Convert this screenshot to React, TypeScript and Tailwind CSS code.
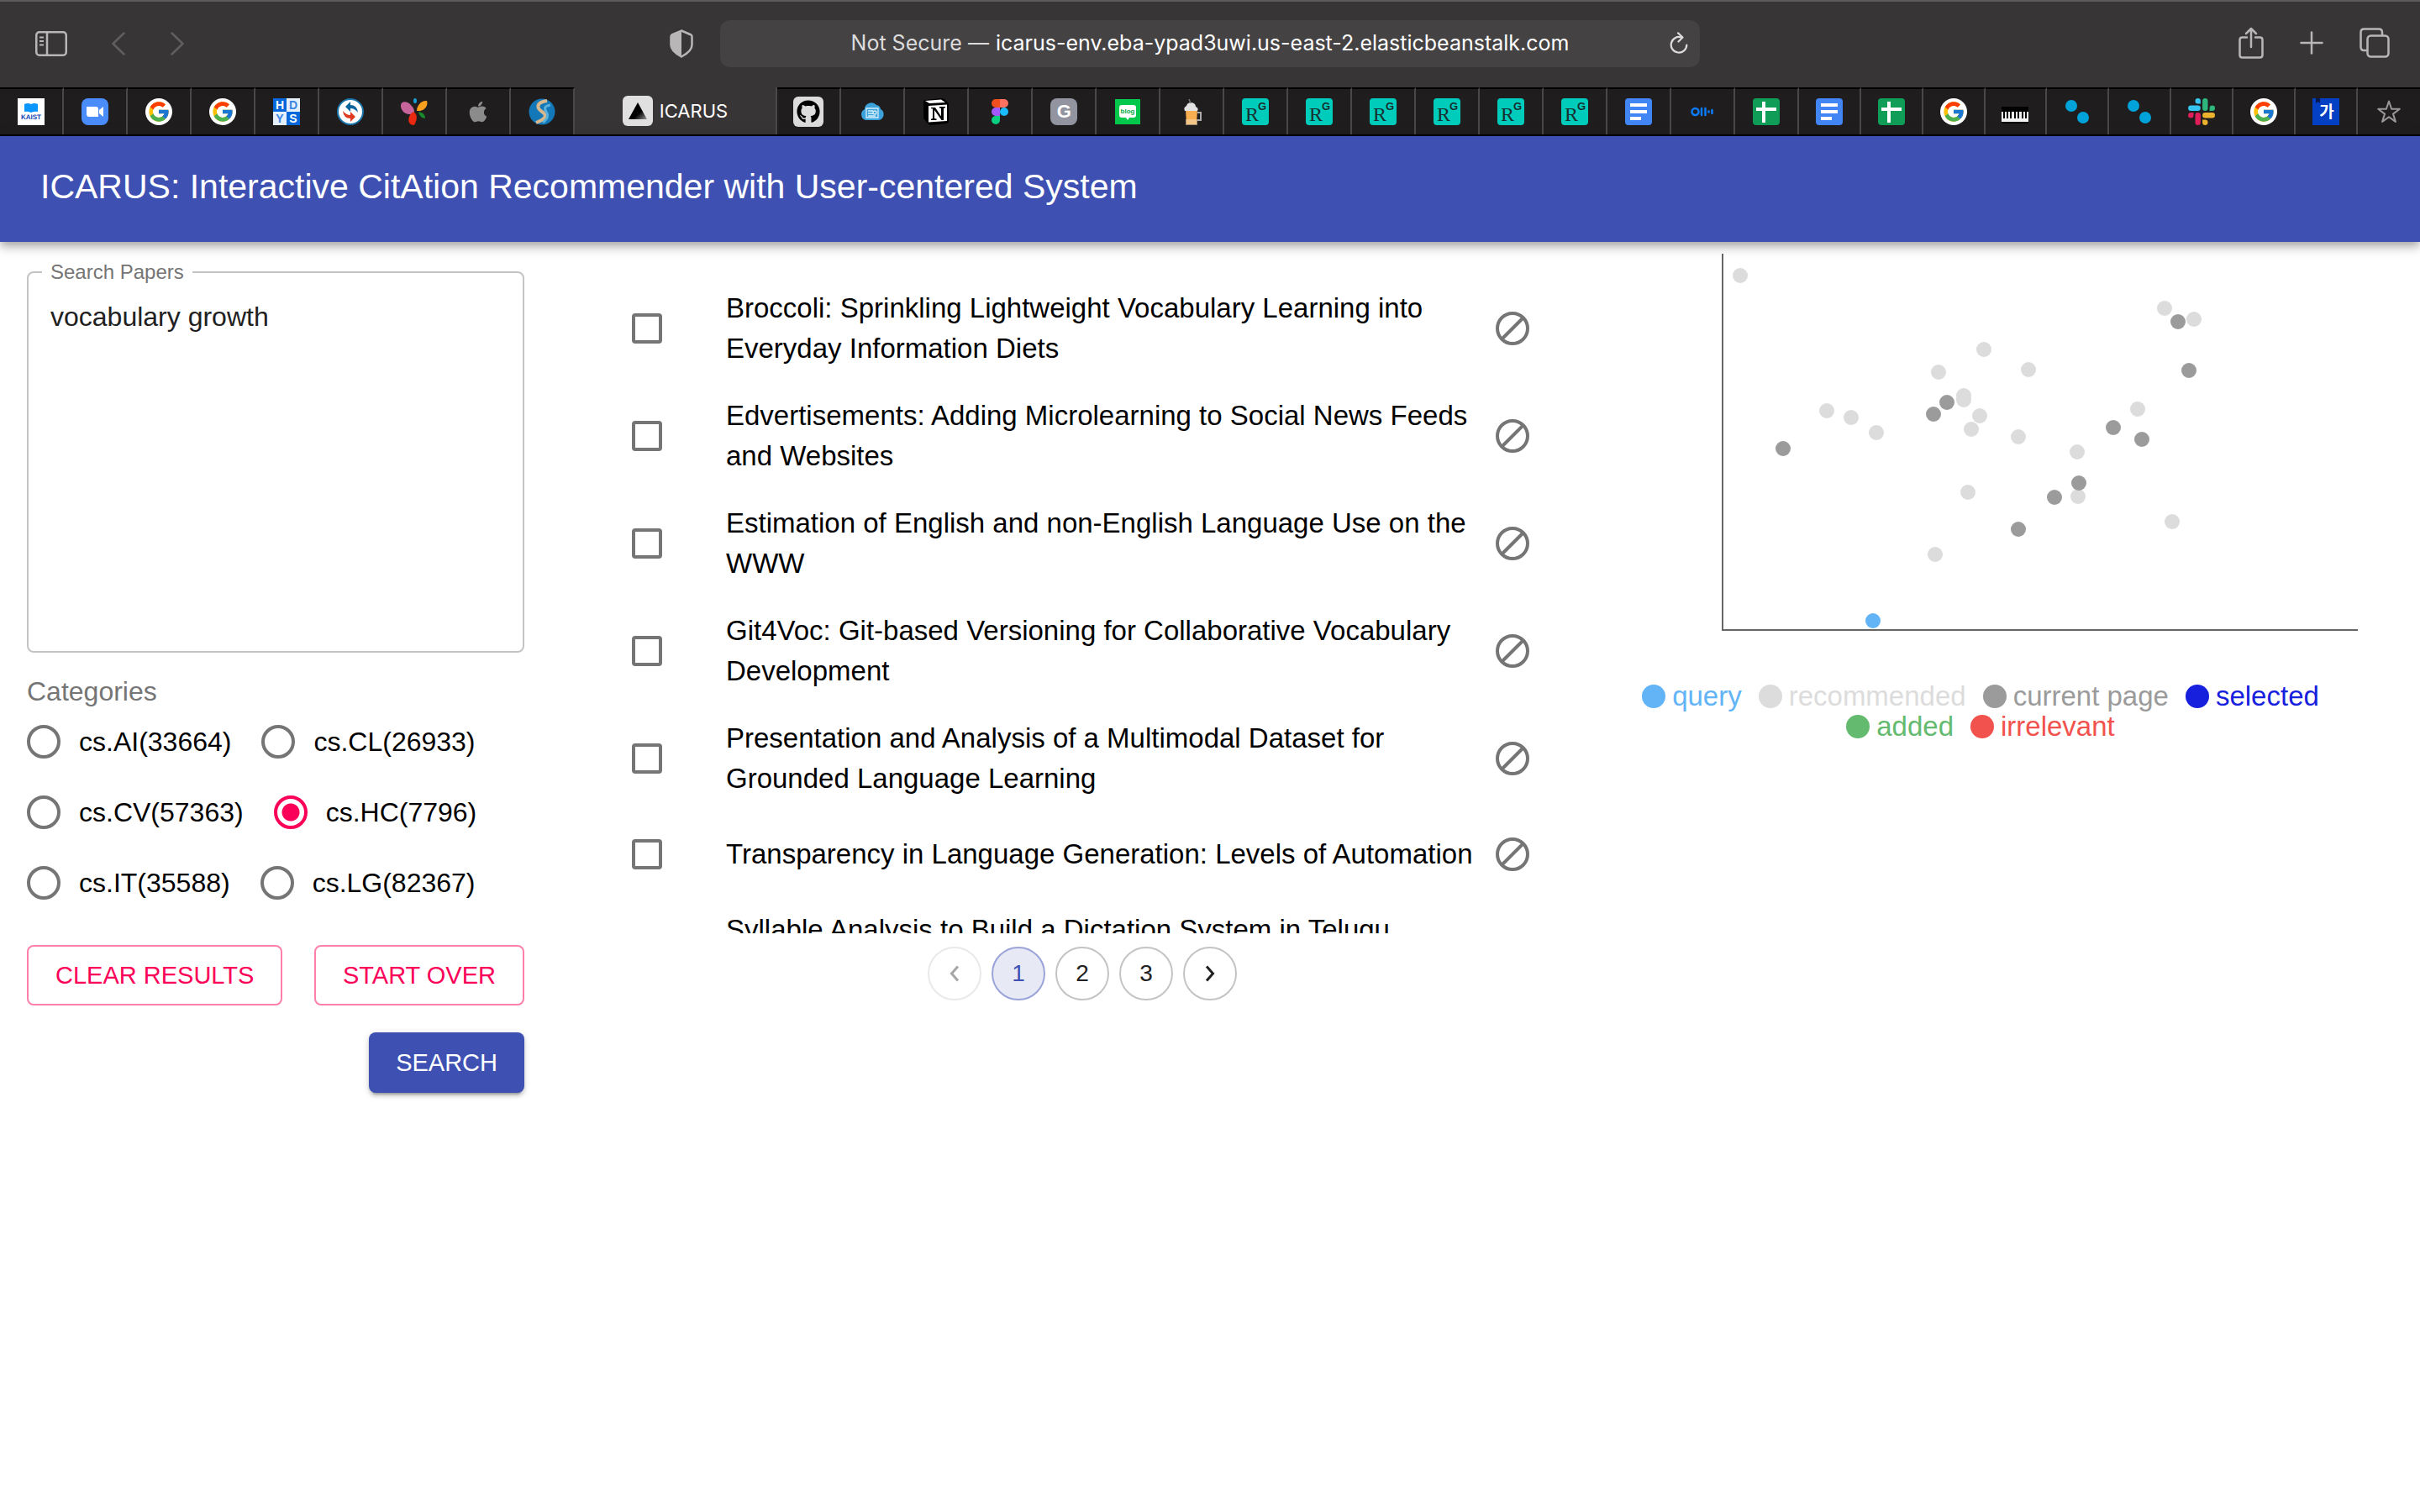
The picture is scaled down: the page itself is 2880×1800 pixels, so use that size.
import { useState, type ReactNode } from "react";
import { FcGoogle } from "react-icons/fc";
import { FaApple, FaGithub } from "react-icons/fa";

/* ---------- favicons ---------- */

function Kaist() {
  return (
    <svg viewBox="0 0 32 32" className="size-8">
      <rect width="32" height="32" fill="#fff" />
      <path d="M8 7q4-2 8 0q4-2 8 0v9q-4-1-8 1q-4-2-8-1z" fill="#0a96ff" />
      <text x="16" y="25" textAnchor="middle" fontSize="8" fontWeight="700" fill="#1546b4" textRendering="geometricPrecision">KAIST</text>
    </svg>
  );
}

function Zoom() {
  return (
    <svg viewBox="0 0 32 32" className="size-8">
      <rect width="32" height="32" rx="8" fill="#4a8cf9" />
      <path d="M6 10h11q3 0 3 3v9H9q-3 0-3-3zM21 14l5-4v12l-5-4z" fill="#fff" />
    </svg>
  );
}

function Google() {
  return (
    <span className="grid size-8 place-items-center rounded-full bg-white">
      <FcGoogle className="size-7" />
    </span>
  );
}

function Hdys() {
  return (
    <svg viewBox="0 0 32 32" className="size-8" fontWeight="700" fontSize="14" textAnchor="middle">
      <rect width="32" height="32" fill="#e6f0fc" />
      <path d="M0 0h16v16H0zM16 16h16v16H16z" fill="#0768dc" />
      <text x="8" y="13" fill="#fff">H</text>
      <text x="24" y="13" fill="#3b86e0">D</text>
      <text x="8" y="29" fill="#3b86e0">Y</text>
      <text x="24" y="29" fill="#fff">S</text>
    </svg>
  );
}

function Sync() {
  return (
    <svg viewBox="0 0 32 32" className="size-8">
      <circle cx="16" cy="16" r="15" fill="#fff" stroke="#1b76ad" strokeWidth="2" />
      <path d="M10 10l6-6v4q8 0 9 9q-4-5-9-5v4z" fill="#0a649c" />
      <path d="M22 22l-6 6v-4q-8 0-9-9q4 5 9 5v-4z" fill="#e03a20" />
    </svg>
  );
}

function Butterfly() {
  return (
    <svg viewBox="0 0 32 32" className="size-8">
      <path d="M16 17C9 22 1 17 0 10S7 3 11 7s5 6 5 10z" fill="#c8649c" />
      <path d="M19 15C19 8 25 2 31 3c2 6-3 13-12 12z" fill="#fba01e" />
      <path d="M15 16c5 3 5 9 1 16c-6 0-8-5-6-10c1-3 3-5 5-6z" fill="#ea2a10" />
      <path d="M21 16q8 1 8 8q-6 0-8-8z" fill="#188a2c" />
      <ellipse cx="17" cy="3" rx="2" ry="3" fill="#14a0d8" />
    </svg>
  );
}

function Globe() {
  return (
    <svg viewBox="0 0 32 32" className="size-8">
      <circle cx="16" cy="16" r="15.5" fill="#1478b8" />
      <path d="M22 3C8 5 10 12 16 16s6 8-7 13" fill="none" stroke="#d8b88c" strokeWidth="4" />
      <path d="M26 8C16 10 20 14 22 18s0 7-5 11" fill="none" stroke="#58b0dc" strokeWidth="3" />
    </svg>
  );
}

function Triangle() {
  return (
    <svg viewBox="0 0 36 36" className="size-9">
      <defs>
        <linearGradient id="tri" x1="0" y1="0" x2="1" y2="1">
          <stop offset="0.6" stopColor="#000" />
          <stop offset="1" stopColor="#999" />
        </linearGradient>
      </defs>
      <rect width="36" height="36" rx="6" fill="#e0e0e0" />
      <path d="M18 8l11 20H7z" fill="url(#tri)" />
    </svg>
  );
}

function Github() {
  return (
    <span className="grid size-9 place-items-center rounded-md bg-[#dcdcdc]">
      <FaGithub className="size-7 text-black" />
    </span>
  );
}

function CloudDoc() {
  return (
    <svg viewBox="0 0 32 32" className="size-8">
      <path d="M8 26a7 7 0 0 1-1-13a8 8 0 0 1 14-5a6 6 0 0 1 5 5a7 7 0 0 1-2 13z" fill="#3ca2dc" />
      <path d="M9 12h14v11H9zM11 15h6M11 18h6M11 21h9" fill="none" stroke="#d6effc" strokeWidth="1.3" />
      <circle cx="19" cy="17" r="2" fill="none" stroke="#d6effc" strokeWidth="1.3" />
    </svg>
  );
}

function Notion() {
  return (
    <svg viewBox="0 0 32 32" className="size-8">
      <path d="M1 4q0-2 2-2L22 0q2 0 4 1l4 4q1 1 1 3v19q0 3-3 3L10 32q-2 0-4-2l-4-5q-1-1-1-3z" fill="#000" />
      <path d="M3 3l19-1.500 5 3.500L8 6z" fill="#fff" />
      <path d="M7 9l22-1.500V27L7 28.500z" fill="#fff" />
      <path d="M10 11h5l7 10.500V12l-2-.5V10h7v1.200l-2 .6V26h-2.500L14 14v10l2.500.6V26H10v-1.300l2-.6V12.500l-2-.5z" fill="#000" />
    </svg>
  );
}

function Figma() {
  return (
    <svg viewBox="0 0 20 30" className="h-[30px] w-5">
      <path d="M10 0H5a5 5 0 0 0 0 10h5z" fill="#f24e1e" />
      <path d="M10 0h5a5 5 0 0 1 0 10h-5z" fill="#ff7262" />
      <path d="M10 10H5a5 5 0 0 0 0 10h5z" fill="#a259ff" />
      <circle cx="15" cy="15" r="5" fill="#1abcfe" />
      <path d="M10 20H5a5 5 0 1 0 5 5z" fill="#0acf83" />
    </svg>
  );
}

function GrayG() {
  return <span className="grid size-8 place-items-center rounded-lg bg-[#9294a0] text-[22px] leading-8 font-bold text-white">G</span>;
}

function Blog() {
  return (
    <svg viewBox="0 0 30 30" className="size-[30px]">
      <rect width="30" height="30" fill="#04c84c" />
      <path d="M8 7h14q3 0 3 3v9q0 3-3 3h-5l-2 3-2-3H8q-3 0-3-3v-9q0-3 3-3z" fill="#fff" />
      <text x="15" y="17" textAnchor="middle" fontSize="8" fontWeight="700" fill="#04a844">blog</text>
    </svg>
  );
}

function Beer() {
  return (
    <svg viewBox="0 0 32 32" className="size-8">
      <path d="M23 17h4v9h-4" fill="none" stroke="#aaa" strokeWidth="2" />
      <path d="M9 13h14l-1 18H10z" fill="#f8ae50" />
      <path d="M9 25h14v7H9z" fill="#f0d4ac" opacity="0.6" />
      <path d="M8 15q-2-4 2-6q1-4 6-4q5 1 5 5q4 2 2 5z" fill="#e2e2e2" />
      <path d="M13 1l2 5" stroke="#777" strokeWidth="1.500" />
    </svg>
  );
}

function ResearchGate() {
  return (
    <svg viewBox="0 0 32 32" className="size-8">
      <rect width="32" height="32" rx="4" fill="#00ccbb" />
      <text x="4" y="27" fontSize="24" className="font-['Liberation_Serif',serif]" fill="#17302f">R</text>
      <text x="19" y="14" fontSize="13" fontWeight="700" fill="#17302f">G</text>
    </svg>
  );
}

function Docs() {
  return (
    <svg viewBox="0 0 32 32" className="size-8">
      <rect width="32" height="32" rx="4" fill="#4285f4" />
      <path d="M6 6h20v4H6zM6 14h20v4H6zM6 22h13v4H6z" fill="#fff" />
    </svg>
  );
}

function Otter() {
  return (
    <svg viewBox="0 0 28 12" className="h-3 w-7" fill="none" stroke="#0a7cff" strokeWidth="2.500" strokeLinecap="round">
      <circle cx="5.500" cy="6" r="4" />
      <path d="M13 2v8M17.500 2v8M21.500 5.500v1M25.500 4v4" />
    </svg>
  );
}

function Sheets() {
  return (
    <svg viewBox="0 0 32 32" className="size-8">
      <rect width="32" height="32" rx="4" fill="#0f9d58" />
      <path d="M11 4h4v7h13v4H15v14h-4V15H4v-4h7z" fill="#fff" />
    </svg>
  );
}

function Piano() {
  return (
    <svg viewBox="0 0 32 20" className="mt-2 h-5 w-8">
      <rect width="32" height="20" fill="#000" />
      <path d="M0 6h32v12H0z" fill="#f2f2f2" />
      <path d="M3 6v8M7 6v8M11 6v8M16 6v8M20 6v8M25 6v8M29 6v8" stroke="#000" strokeWidth="2" />
    </svg>
  );
}

function Dots() {
  return (
    <svg viewBox="0 0 28 28" className="size-7" fill="#00a3d9">
      <circle cx="7" cy="7" r="7" />
      <circle cx="21" cy="21" r="7" />
    </svg>
  );
}

function Slack() {
  return (
    <svg viewBox="0 0 32 32" className="size-8">
      <path d="M8.500 3.200a3.200 3.200 0 1 1 6.400 0v3.300h-3.200A3.200 3.200 0 0 1 8.500 3.200zM3.300 8.600h8.300a3.200 3.200 0 0 1 0 6.400H3.300a3.200 3.200 0 0 1 0-6.400z" fill="#36c5f0" />
      <path d="M28.800 8.600a3.200 3.200 0 1 1 0 6.400h-3.200v-3.200a3.200 3.200 0 0 1 3.200-3.200zM23.500 3.200v8.500a3.200 3.200 0 0 1-6.400 0V3.200a3.200 3.200 0 0 1 6.400 0z" fill="#2eb67d" />
      <path d="M23.500 28.800a3.200 3.200 0 1 1-6.400 0v-3.200h3.200a3.200 3.200 0 0 1 3.200 3.200zM28.800 23.500h-8.500a3.200 3.200 0 0 1 0-6.400h8.500a3.200 3.200 0 0 1 0 6.400z" fill="#ecb22e" />
      <path d="M3.300 23.500a3.200 3.200 0 1 1 0-6.400h3.200v3.200a3.200 3.200 0 0 1-3.200 3.200zM8.500 28.800v-8.500a3.200 3.200 0 0 1 6.400 0v8.500a3.200 3.200 0 0 1-6.400 0z" fill="#e01e5a" />
    </svg>
  );
}

function Dictionary() {
  return (
    <svg viewBox="0 0 32 32" className="size-8">
      <rect width="32" height="32" fill="#0340c4" />
      <path d="M4 0h5v6L6.500 4 4 6z" fill="#04174e" />
      <text x="17" y="23" textAnchor="middle" fontSize="19" fontWeight="700" className="font-['Noto_Sans_CJK_KR',sans-serif]" fill="#fff">가</text>
    </svg>
  );
}

function Star() {
  return (
    <svg viewBox="0 0 28 28" className="size-7" fill="none" stroke="#9a9899" strokeWidth="2" strokeLinejoin="round">
      <path d="M14 1.500l3.100 9.200 9.700.1-7.800 5.800 2.900 9.300-7.900-5.600-7.900 5.600 2.900-9.300-7.800-5.800 9.700-.1z" />
    </svg>
  );
}

/* ---------- browser chrome ---------- */

type TabInfo = { name: string; icon: ReactNode; narrow?: boolean; active?: boolean };

const tabs: TabInfo[] = [
  { name: "KAIST", icon: <Kaist /> },
  { name: "Zoom", icon: <Zoom /> },
  { name: "Google", icon: <Google /> },
  { name: "Google", icon: <Google /> },
  { name: "HDYS", icon: <Hdys /> },
  { name: "Sync", icon: <Sync /> },
  { name: "Butterfly", icon: <Butterfly /> },
  { name: "Apple", icon: <FaApple className="size-7 text-[#8b8b8b]" /> },
  { name: "Globe", icon: <Globe /> },
  { name: "ICARUS", icon: <Triangle />, active: true },
  { name: "GitHub", icon: <Github /> },
  { name: "Cloud", icon: <CloudDoc /> },
  { name: "Notion", icon: <Notion /> },
  { name: "Figma", icon: <Figma /> },
  { name: "G", icon: <GrayG /> },
  { name: "Blog", icon: <Blog /> },
  { name: "Beer", icon: <Beer /> },
  { name: "ResearchGate", icon: <ResearchGate /> },
  { name: "ResearchGate", icon: <ResearchGate /> },
  { name: "ResearchGate", icon: <ResearchGate /> },
  { name: "ResearchGate", icon: <ResearchGate /> },
  { name: "ResearchGate", icon: <ResearchGate /> },
  { name: "ResearchGate", icon: <ResearchGate /> },
  { name: "Docs", icon: <Docs /> },
  { name: "Otter", icon: <Otter /> },
  { name: "Sheets", icon: <Sheets /> },
  { name: "Docs", icon: <Docs />, narrow: true },
  { name: "Sheets", icon: <Sheets />, narrow: true },
  { name: "Google", icon: <Google />, narrow: true },
  { name: "Piano", icon: <Piano />, narrow: true },
  { name: "Dots", icon: <Dots />, narrow: true },
  { name: "Dots", icon: <Dots />, narrow: true },
  { name: "Slack", icon: <Slack />, narrow: true },
  { name: "Google", icon: <Google />, narrow: true },
  { name: "Dictionary", icon: <Dictionary />, narrow: true },
  { name: "Favorites", icon: <Star />, narrow: true },
];

function Toolbar() {
  return (
    <div className="grid h-[104px] grid-cols-[857fr_1166fr_857fr] items-center border-t-2 border-[#5d5b5c] bg-[#383536] pb-0.5 text-[#b8b6b7]">
      <div className="flex items-center pr-8 pl-[42px]">
        <button aria-label="Sidebar">
          <svg viewBox="0 0 38 30" className="h-[30px] w-[38px]" fill="none" stroke="currentColor" strokeWidth="2.500">
            <rect x="1.250" y="1.250" width="35.500" height="27.500" rx="3.500" />
            <path d="M14 1v28" />
            <path d="M5 7.500h5M5 12h5M5 16.500h5" strokeWidth="2" />
          </svg>
        </button>
        <button aria-label="Back" className="ml-[53px] text-[#605e5f]">
          <svg viewBox="0 0 16 28" className="h-7 w-4" fill="none" stroke="currentColor" strokeWidth="2.500" strokeLinecap="round" strokeLinejoin="round">
            <path d="M14.500 1.500L1.500 14l13 12.500" />
          </svg>
        </button>
        <button aria-label="Forward" className="ml-[54px] text-[#605e5f]">
          <svg viewBox="0 0 16 28" className="h-7 w-4" fill="none" stroke="currentColor" strokeWidth="2.500" strokeLinecap="round" strokeLinejoin="round">
            <path d="M1.500 1.500L14.500 14l-13 12.500" />
          </svg>
        </button>
        <button aria-label="Privacy report" className="ml-auto">
          <svg viewBox="0 0 28 34" className="h-[34px] w-7">
            <path d="M14 1.500l11.500 5q1 .5 1 2v10c0 5-5 10-12.500 14C6.500 28.500 1.500 23.500 1.500 18.500v-10q0-1.500 1-2z" fill="none" stroke="currentColor" strokeWidth="2.500" />
            <path d="M14 1.500v31C6.500 28.500 1.500 23.500 1.500 18.500v-10q0-1.500 1-2z" fill="currentColor" />
          </svg>
        </button>
      </div>
      <div className="flex h-14 items-center justify-between rounded-xl bg-[#444243] px-3.5 pb-0.5 font-['Inter',sans-serif] text-[25px] leading-8">
        <span className="w-[22px]" />
        <div className="flex gap-2">
          <label htmlFor="address" className="text-[#dddcdc]">Not Secure —</label>
          <input id="address" defaultValue="icarus-env.eba-ypad3uwi.us-east-2.elasticbeanstalk.com" className="field-sizing-content bg-transparent text-white outline-none" />
        </div>
        <button aria-label="Reload" className="text-[#dddcdc]">
          <svg viewBox="0 0 22 26" className="h-[26px] w-[22px]" fill="none" stroke="currentColor" strokeWidth="2.200" strokeLinecap="round" strokeLinejoin="round">
            <path d="M14 6.500A9.300 9.300 0 1 0 20.300 15.500" />
            <path d="M10 1.300L15.500 6.500 10.500 11.500" />
          </svg>
        </button>
      </div>
      <div className="flex items-center justify-end gap-[43px] pr-9 pb-0.5">
        <button aria-label="Share">
          <svg viewBox="0 0 30 38" className="h-[38px] w-[30px]" fill="none" stroke="currentColor" strokeWidth="2.500" strokeLinecap="round" strokeLinejoin="round">
            <path d="M10 12.500H4.500q-3 0-3 3v18q0 3 3 3h21q3 0 3-3v-18q0-3-3-3H20M15 24V2M9 8l6-6 6 6" />
          </svg>
        </button>
        <button aria-label="New tab">
          <svg viewBox="0 0 28 28" className="size-7" fill="none" stroke="currentColor" strokeWidth="2.500" strokeLinecap="round">
            <path d="M14 1.500v25M1.500 14h25" />
          </svg>
        </button>
        <button aria-label="Show all tabs">
          <svg viewBox="0 0 36 36" className="size-9" fill="none" stroke="currentColor" strokeWidth="2.500">
            <rect x="9.500" y="9.500" width="25" height="25" rx="4" />
            <path d="M9.500 27H5.500q-4 0-4-4V5.500q0-4 4-4h17.500q4 0 4 4v4" />
          </svg>
        </button>
      </div>
    </div>
  );
}

function TabBar() {
  return (
    <div role="tablist" className="flex h-[58px] border-b-2 border-black bg-[#383536]">
      {tabs.map((tab, i) =>
        tab.active ? (
          <button key={i} role="tab" aria-selected="true" className="flex flex-[242_1_242px] items-center justify-center gap-2 border-r-2 border-[#4a4849] font-['Inter',sans-serif] text-[22px] leading-7 text-white">
            {tab.icon}
            {tab.name}
          </button>
        ) : (
          <button
            key={i}
            role="tab"
            aria-selected="false"
            aria-label={tab.name}
            className={`flex items-center justify-center border-t-2 border-r-2 border-t-black border-r-[#4a4849] bg-[#1f1d1e] last:border-r-0 ${tab.narrow ? "flex-[74_1_74px]" : "flex-[76_1_76px]"}`}
          >
            {tab.icon}
          </button>
        ),
      )}
    </div>
  );
}

/* ---------- search panel ---------- */

const categories = ["cs.AI(33664)", "cs.CL(26933)", "cs.CV(57363)", "cs.HC(7796)", "cs.IT(35588)", "cs.LG(82367)"];

function SearchPanel() {
  const [category, setCategory] = useState("cs.HC(7796)");
  return (
    <form className="px-8 pt-[22px] text-[32px]" onSubmit={(e) => e.preventDefault()}>
      <fieldset className="rounded-lg border-2 border-[#c4c4c4] pl-4">
        <legend className="px-2.5 text-2xl leading-7 text-[#757575]">
          <label htmlFor="papers">Search Papers</label>
        </legend>
        <textarea id="papers" defaultValue="vocabulary growth" className="block h-[437px] w-full resize-none bg-transparent px-2.5 pt-5 leading-[38px] text-[#212121] outline-none" />
      </fieldset>
      <fieldset className="mt-7">
        <legend className="leading-9 text-[#757575]">Categories</legend>
        <div className="flex flex-wrap gap-x-9">
          {categories.map((c) => (
            <label key={c} className="flex h-[84px] items-center gap-[22px] text-black">
              <input
                type="radio"
                name="category"
                checked={category === c}
                onChange={() => setCategory(c)}
                className="size-10 appearance-none rounded-full border-4 border-[#757575] checked:border-[#fa0058] checked:bg-[radial-gradient(circle,#fa0058_10px,transparent_11px)]"
              />
              {c}
            </label>
          ))}
        </div>
      </fieldset>
      <div className="mt-8 flex justify-between text-[29px] leading-[68px] text-[#fa0058]">
        <button type="button" className="rounded-lg border-2 border-[#fc80ab] px-8">CLEAR RESULTS</button>
        <button type="button" className="rounded-lg border-2 border-[#fc80ab] px-8">START OVER</button>
      </div>
      <div className="mt-8 flex justify-end text-[29px] leading-[72px] text-white">
        <button type="submit" className="rounded-lg bg-[#3e50b2] px-8 shadow-[0_6px_2px_-4px_rgba(0,0,0,0.2),0_4px_4px_0_rgba(0,0,0,0.14),0_2px_10px_0_rgba(0,0,0,0.12)]">SEARCH</button>
      </div>
    </form>
  );
}

/* ---------- results ---------- */

const papers = [
  "Broccoli: Sprinkling Lightweight Vocabulary Learning into Everyday Information Diets",
  "Edvertisements: Adding Microlearning to Social News Feeds and Websites",
  "Estimation of English and non-English Language Use on the WWW",
  "Git4Voc: Git-based Versioning for Collaborative Vocabulary Development",
  "Presentation and Analysis of a Multimodal Dataset for Grounded Language Learning",
  "Transparency in Language Generation: Levels of Automation",
  "Syllable Analysis to Build a Dictation System in Telugu language",
];

function Chevron({ d }: { d: string }) {
  return (
    <svg viewBox="0 0 12 20" className="h-5 w-3" fill="none" stroke="currentColor" strokeWidth="3">
      <path d={d} />
    </svg>
  );
}

function Results() {
  return (
    <section className="pt-[39px]">
      <ul className="h-[784px] overflow-y-auto pr-[100px] pl-24 [scrollbar-width:none]">
        {papers.map((title, i) => (
          <li key={title} className="flex min-h-[100px] items-center py-4">
            <input id={`paper-${i}`} type="checkbox" className="size-9 shrink-0 appearance-none rounded-sm border-4 border-[#757575] checked:bg-[#757575]" />
            <label htmlFor={`paper-${i}`} className="ml-[76px] flex-1 text-[33px] leading-[48px] text-black">{title}</label>
            <button aria-label="Mark as irrelevant" className="ml-3 shrink-0">
              <svg viewBox="0 0 40 40" className="size-10" fill="none" stroke="#757575" strokeWidth="4">
                <circle cx="20" cy="20" r="18" />
                <path d="M7.500 32.500l25-25" />
              </svg>
            </button>
          </li>
        ))}
      </ul>
      <nav aria-label="Pages" className="mt-4 flex justify-center gap-3 text-[28px] text-[#212121] [&>button]:grid [&>button]:size-16 [&>button]:place-items-center [&>button]:rounded-full [&>button]:border-2">
        <button aria-label="Previous page" disabled className="border-[#e9e9e9] text-[#a6a6a6]">
          <Chevron d="M10 1.500L2.500 10l7.500 8.500" />
        </button>
        <button aria-current="page" className="border-[#9aa4d9] bg-[#e7e9f5] text-[#3e50b2]">1</button>
        <button className="border-[#c4c4c4]">2</button>
        <button className="border-[#c4c4c4]">3</button>
        <button aria-label="Next page" className="border-[#c4c4c4]">
          <Chevron d="M2 1.500L9.500 10 2 18.500" />
        </button>
      </nav>
    </section>
  );
}

/* ---------- scatter plot ---------- */

const recommended = [
  [151, 40], [656, 79], [691, 92], [441, 128], [494, 152], [387, 155], [417, 183], [417, 188], [254, 201], [283, 209],
  [313, 227], [436, 207], [426, 223], [482, 232], [624, 199], [552, 250], [553, 303], [422, 298], [665, 333], [383, 372],
];
const currentPage = [
  [672, 95], [685, 153], [397, 191], [381, 205], [202, 246], [595, 221], [629, 235], [554, 287], [525, 304], [482, 342],
];

const legend = [
  { label: "query", className: "text-[#62b4f6]" },
  { label: "recommended", className: "text-[#dcdcdc]" },
  { label: "current page", className: "text-[#9b9b9b]" },
  { label: "selected", className: "text-[#1620dd]" },
  { label: "added", className: "text-[#64ba6f]" },
  { label: "irrelevant", className: "text-[#f2524e]" },
];

function Plot() {
  return (
    <section>
      <svg viewBox="0 0 960 523" className="w-full" role="img" aria-label="Paper map">
        <path d="M130 14v448h756" fill="none" stroke="#666" strokeWidth="2" />
        {recommended.map(([x, y], i) => (
          <circle key={i} cx={x} cy={y} r="9" fill="#dcdcdc" />
        ))}
        {currentPage.map(([x, y], i) => (
          <circle key={i} cx={x} cy={y} r="9" fill="#9b9b9b" />
        ))}
        <circle cx="309" cy="451" r="9" fill="#62b4f6" />
      </svg>
      <ul className="flex flex-wrap justify-center gap-x-5 pr-[86px] text-[33px] leading-9">
        {legend.map((item) => (
          <li key={item.label} className={`flex items-center gap-2 ${item.className}`}>
            <span className="size-7 rounded-full bg-current" />
            {item.label}
          </li>
        ))}
      </ul>
    </section>
  );
}

export default function App() {
  return (
    <div className="min-h-screen bg-white font-['Liberation_Sans',Arial,sans-serif]">
      <Toolbar />
      <TabBar />
      <header className="relative z-10 bg-[#3e50b2] px-12 pt-7 pb-[34px] shadow-[0_4px_8px_-2px_rgba(0,0,0,0.2),0_8px_10px_0_rgba(0,0,0,0.14),0_2px_20px_0_rgba(0,0,0,0.12)]">
        <h1 className="text-[41px] leading-[64px] text-white">ICARUS: Interactive CitAtion Recommender with User-centered System</h1>
      </header>
      <main className="grid grid-cols-[656fr_1264fr_960fr] items-start">
        <SearchPanel />
        <Results />
        <Plot />
      </main>
    </div>
  );
}
